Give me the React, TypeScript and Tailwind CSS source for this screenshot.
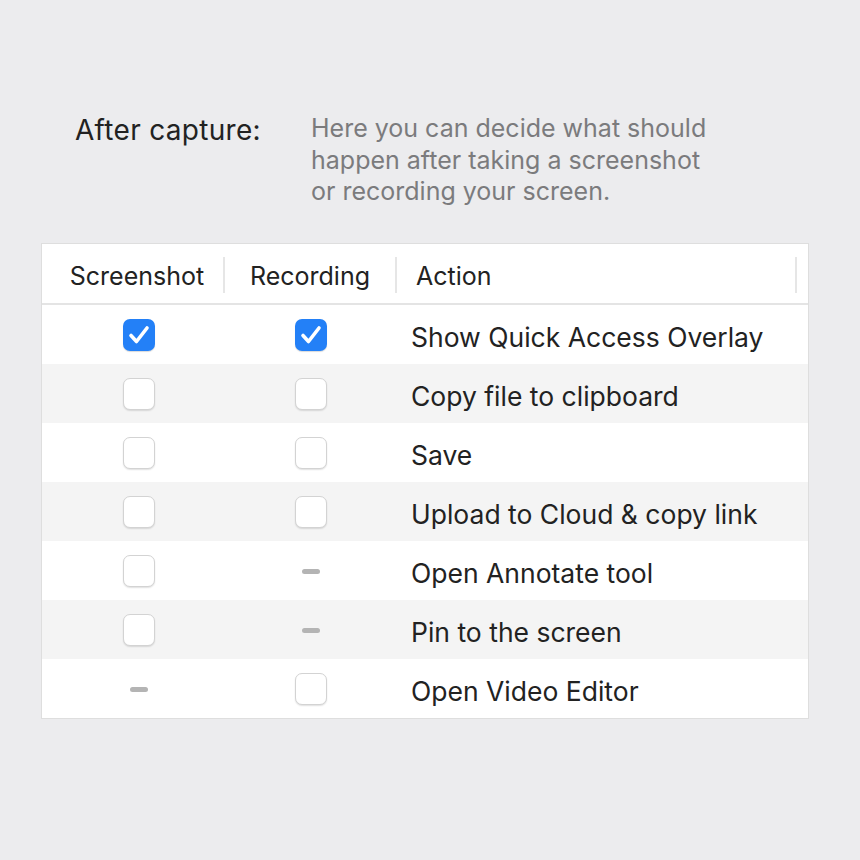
import React from "react";

const rows: { label: string; s: "on" | "off" | "na"; r: "on" | "off" | "na" }[] = [
  { label: "Show Quick Access Overlay", s: "on", r: "on" },
  { label: "Copy file to clipboard", s: "off", r: "off" },
  { label: "Save", s: "off", r: "off" },
  { label: "Upload to Cloud & copy link", s: "off", r: "off" },
  { label: "Open Annotate tool", s: "off", r: "na" },
  { label: "Pin to the screen", s: "off", r: "na" },
  { label: "Open Video Editor", s: "na", r: "off" },
];

function Cell({ state }: { state: "on" | "off" | "na" }) {
  if (state === "on") {
    return (
      <div className="w-[32px] h-[32px] rounded-[7px] bg-[#2380f7] flex items-center justify-center shadow-[0_1px_1px_rgba(0,0,0,0.15)]">
        <svg width="32" height="32" viewBox="0 0 32 32" fill="none">
          <path d="M8 16.5 L13.5 22.5 L24 9" stroke="white" strokeWidth="3.6" strokeLinecap="round" strokeLinejoin="round" />
        </svg>
      </div>
    );
  }
  if (state === "off") {
    return (
      <div className="w-[32px] h-[32px] rounded-[7px] bg-white border border-[#d3d3d3] shadow-[0_1px_1.5px_rgba(0,0,0,0.12)]" />
    );
  }
  return <div className="w-[18px] h-[5px] rounded-full bg-[#b4b4b4]" />;
}

export default function App() {
  return (
    <div
      className="w-[860px] h-[860px] bg-[#ececee] overflow-hidden"
      style={{ fontFamily: "Inter, 'Noto Sans', sans-serif" }}
    >
      <div className="flex pt-[112px] pl-[75px]">
        <div className="w-[236px] text-[28px] leading-[36px] text-[#222222] tracking-[0.3px]">After capture:</div>
        <div className="text-[25px] leading-[31.5px] text-[#7b7b7d] pt-[1px]">
          Here you can decide what should
          <br />
          happen after taking a screenshot
          <br />
          or recording your screen.
        </div>
      </div>

      <div className="ml-[41px] mt-[35px] w-[768px] bg-white border border-[#dedede]">
        <div className="flex h-[61px] items-center border-b-2 border-[#e4e4e4] text-[25px] text-[#222222] pt-[3px]">
          <div className="w-[183px] h-[36px] flex items-center justify-center pl-[9px] border-r-2 border-[#e6e6e6]">
            <span className="mt-[4px]">Screenshot</span>
          </div>
          <div className="w-[172px] h-[36px] flex items-center justify-center border-r-2 border-[#e6e6e6]">
            <span className="mt-[4px]">Recording</span>
          </div>
          <div className="w-[400px] h-[36px] flex items-center pl-[19px] border-r-2 border-[#e6e6e6]">
            <span className="mt-[4px]">Action</span>
          </div>
        </div>
        {rows.map((row, i) => (
          <div
            key={row.label}
            className={`flex h-[59px] items-center text-[26.5px] text-[#222222] pt-[2px] ${i % 2 === 1 ? "bg-[#f4f4f4]" : "bg-white"}`}
          >
            <div className="w-[183px] flex items-center justify-center pl-[11px]">
              <Cell state={row.s} />
            </div>
            <div className="w-[172px] flex items-center justify-center">
              <Cell state={row.r} />
            </div>
            <div className="pl-[14px] mt-[6px]">{row.label}</div>
          </div>
        ))}
      </div>
    </div>
  );
}
